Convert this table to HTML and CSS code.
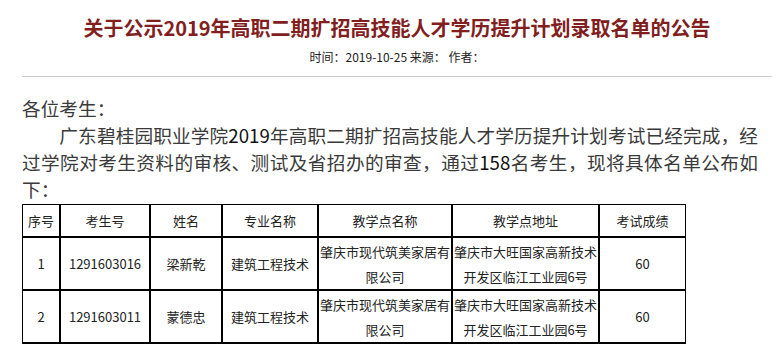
FILE: index.html
```html
<!DOCTYPE html>
<html lang="zh-CN">
<head>
<meta charset="utf-8">
<title>关于公示2019年高职二期扩招高技能人才学历提升计划录取名单的公告</title>
<link rel="stylesheet" href="styles.css">
</head>
<body>
<div class="article">
  <header class="article-head">
    <h1 class="title">关于公示2019年高职二期扩招高技能人才学历提升计划录取名单的公告</h1>
    <div class="meta">时间：2019-10-25 来源： 作者：</div>
  </header>
  <div class="content">
    <p class="greet">各位考生：</p>
    <p class="para">广东碧桂园职业学院<span class="num">2019</span>年高职二期扩招高技能人才学历提升计划考试已经完成，经过学院对考生资料的审核、测试及省招办的审查，通过<span class="num">158</span>名考生，现将具体名单公布如下：</p>
    <table class="list">
      <thead>
        <tr class="head-row">
          <th class="c1">序号</th>
          <th class="c2">考生号</th>
          <th class="c3">姓名</th>
          <th class="c4">专业名称</th>
          <th class="c5">教学点名称</th>
          <th class="c6">教学点地址</th>
          <th class="c7">考试成绩</th>
        </tr>
      </thead>
      <tbody>
        <tr class="row">
          <td>1</td>
          <td>1291603016</td>
          <td>梁新乾</td>
          <td>建筑工程技术</td>
          <td>肇庆市现代筑美家居有限公司</td>
          <td>肇庆市大旺国家高新技术开发区临江工业园6号</td>
          <td>60</td>
        </tr>
        <tr class="row">
          <td>2</td>
          <td>1291603011</td>
          <td>蒙德忠</td>
          <td>建筑工程技术</td>
          <td>肇庆市现代筑美家居有限公司</td>
          <td>肇庆市大旺国家高新技术开发区临江工业园6号</td>
          <td>60</td>
        </tr>
        <tr class="row">
          <td></td><td></td><td></td><td></td><td></td><td></td><td></td>
        </tr>
      </tbody>
    </table>
  </div>
</div>
</body>
</html>
```
FILE: styles.css
```css
html, body {
  margin: 0;
  padding: 0;
  background: #fff;
}
body {
  font-family: "Noto Sans CJK SC", "Noto Sans", sans-serif;
  color: #333;
}
.article {
  margin: 0 11px 0 22px;
}
.article-head {
  padding-top: 13px;
  padding-bottom: 9px;
  border-bottom: 1px solid #cccccc;
  text-align: center;
}
.title {
  margin: 0;
  font-size: 20px;
  line-height: 30px;
  font-weight: bold;
  color: #821e1e;
}
.meta {
  margin-top: 4px;
  font-size: 12px;
  line-height: 20px;
  color: #222;
}
.content {
  padding-top: 17px;
}
.greet,
.para {
  margin: 0;
  font-size: 18.67px;
  line-height: 27px;
  color: #3a3a3a;
}
.para {
  width: 736px;
  text-indent: 2em;
  text-align: justify;
}
.num {
  color: #111;
}
.list {
  margin-top: 2px;
  width: 664px;
  table-layout: fixed;
  border-collapse: separate;
  border-spacing: 0;
  font-size: 13px;
  color: #222;
}
.list th,
.list td {
  box-sizing: border-box;
  border: 1px solid #000;
  padding: 0;
  text-align: center;
  vertical-align: middle;
  font-weight: normal;
  line-height: 25px;
}
.head-row th {
  height: 33px;
}
.row td {
  height: 53px;
}
.c1 { width: 38px; }
.c2 { width: 90px; }
.c3 { width: 72px; }
.c4 { width: 96px; }
.c5 { width: 134px; }
.c6 { width: 147px; }
.c7 { width: 87px; }
```
